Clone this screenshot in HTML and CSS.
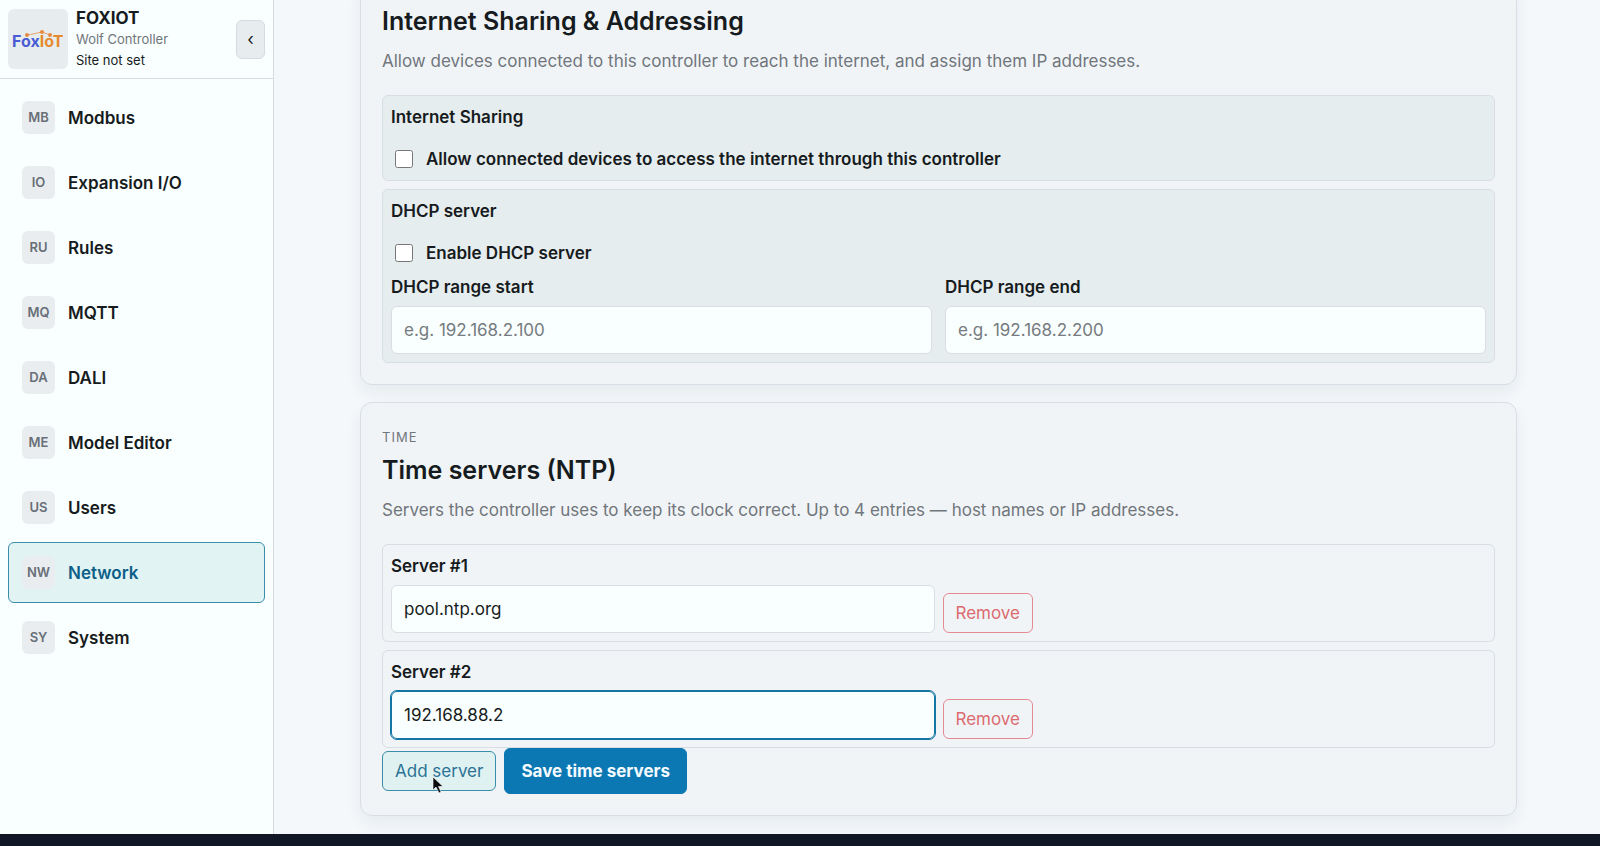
FILE: index.html
```html
<!DOCTYPE html>
<html lang="en">
<head>
    <meta charset="UTF-8">
    <meta name="viewport" content="width=device-width, initial-scale=1.0">
    <title>Network - FOXIOT</title>
    <link rel="stylesheet" href="styles.css">
</head>
<body>
<div class="app">
    <aside class="sidebar">
        <div class="brand">
            <div class="brand-logo">
                <svg viewBox="0 0 60 60" width="60" height="60" role="img" aria-label="FoxIoT">
                    <path d="M20 26 L34 23 L42 26" fill="none" stroke="#e9a468" stroke-width="1"/>
                    <circle cx="19" cy="26" r="2" fill="#e5893f"/>
                    <circle cx="34" cy="23" r="2" fill="#e5893f"/>
                    <circle cx="42" cy="26" r="2" fill="#e5893f"/>
                    <text x="4" y="38" class="logo-text"><tspan fill="#4a5bd4">Fox</tspan><tspan fill="#e58a2e">IoT</tspan></text>
                </svg>
            </div>
            <div class="brand-text">
                <strong class="brand-name">FOXIOT</strong>
                <span class="brand-model">Wolf Controller</span>
                <span class="brand-site">Site not set</span>
            </div>
            <button type="button" class="collapse-btn" aria-label="Collapse menu">‹</button>
        </div>
        <nav class="nav">
            <a class="nav-item" href="#modbus"><span class="nav-icon">MB</span>Modbus</a>
            <a class="nav-item" href="#expansion"><span class="nav-icon">IO</span>Expansion I/O</a>
            <a class="nav-item" href="#rules"><span class="nav-icon">RU</span>Rules</a>
            <a class="nav-item" href="#mqtt"><span class="nav-icon">MQ</span>MQTT</a>
            <a class="nav-item" href="#dali"><span class="nav-icon">DA</span>DALI</a>
            <a class="nav-item" href="#models"><span class="nav-icon">ME</span>Model Editor</a>
            <a class="nav-item" href="#users"><span class="nav-icon">US</span>Users</a>
            <a class="nav-item active" href="#network" aria-current="page"><span class="nav-icon">NW</span>Network</a>
            <a class="nav-item" href="#system"><span class="nav-icon">SY</span>System</a>
        </nav>
    </aside>

    <main class="content">
        <section class="card">
            <h2>Internet Sharing &amp; Addressing</h2>
            <p class="description">Allow devices connected to this controller to reach the internet, and assign them IP addresses.</p>

            <div class="panel filled">
                <h3>Internet Sharing</h3>
                <label class="check-row">
                    <input type="checkbox" id="nat_enabled">
                    Allow connected devices to access the internet through this controller
                </label>
            </div>

            <div class="panel filled">
                <h3>DHCP server</h3>
                <label class="check-row">
                    <input type="checkbox" id="dhcp_enabled">
                    Enable DHCP server
                </label>
                <div class="range-grid">
                    <div class="field">
                        <label for="dhcp_start">DHCP range start</label>
                        <input type="text" id="dhcp_start" placeholder="e.g. 192.168.2.100">
                    </div>
                    <div class="field">
                        <label for="dhcp_end">DHCP range end</label>
                        <input type="text" id="dhcp_end" placeholder="e.g. 192.168.2.200">
                    </div>
                </div>
            </div>
        </section>

        <section class="card">
            <div class="eyebrow">Time</div>
            <h2>Time servers (NTP)</h2>
            <p class="description">Servers the controller uses to keep its clock correct. Up to 4 entries — host names or IP addresses.</p>

            <div class="panel server">
                <div class="field">
                    <label for="server_1">Server #1</label>
                    <input type="text" id="server_1" value="pool.ntp.org">
                </div>
                <button type="button" class="btn danger">Remove</button>
            </div>

            <div class="panel server">
                <div class="field">
                    <label for="server_2">Server #2</label>
                    <input type="text" id="server_2" class="focused" value="192.168.88.2">
                </div>
                <button type="button" class="btn danger">Remove</button>
            </div>

            <div class="actions">
                <button type="button" class="btn secondary">Add server
                    <svg class="cursor" viewBox="0 0 12 18" width="12" height="18" aria-hidden="true">
                        <path d="M1 1 V14 L4 11 L7 17 L9 16 L6.500 10.500 H11 Z" fill="#0b0d10" stroke="#ffffff" stroke-width="0.600"/>
                    </svg>
                </button>
                <button type="submit" class="btn primary">Save time servers</button>
            </div>
        </section>
    </main>
</div>
</body>
</html>
```
FILE: styles.css
```css
* {
    box-sizing: border-box;
}

body {
    margin: 0;
    height: 100vh;
    padding-bottom: 12px;
    background: #101626;
    color: #161b20;
    font-family: Inter, "Liberation Sans", sans-serif;
    font-size: 17px;
    line-height: 26px;
}

h2, h3, p {
    margin: 0;
}

button, input {
    font: inherit;
    color: inherit;
}

.app {
    display: flex;
    height: 100%;
    background: #f4f8fb;
}

/* Sidebar */
.sidebar {
    flex: 0 0 274px;
    background: #f9fefe;
    border-right: 1px solid #d5dbe1;
}

.brand {
    display: flex;
    align-items: center;
    gap: 8px;
    height: 79px;
    padding: 0 8px;
    border-bottom: 1px solid #d5dbe1;
}

.brand-logo {
    width: 60px;
    height: 60px;
    border-radius: 6px;
    background: #e7edef;
}

.brand-logo svg {
    display: block;
}

.logo-text {
    font-size: 16px;
    font-weight: 700;
}

.brand-text {
    display: flex;
    flex: 1;
    flex-direction: column;
    font-size: 13px;
    line-height: 21px;
}

.brand-name {
    font-size: 17px;
    font-weight: 700;
}

.brand-model {
    color: #70767c;
}

.collapse-btn {
    width: 29px;
    height: 39px;
    padding: 0;
    border: 1px solid #d5dbe1;
    border-radius: 6px;
    background: #e7ecef;
}

.nav {
    display: flex;
    flex-direction: column;
    gap: 4px;
    padding: 8px;
}

.nav-item {
    display: flex;
    align-items: center;
    gap: 13px;
    height: 61px;
    padding: 0 13px;
    border: 1px solid transparent;
    border-radius: 6px;
    color: inherit;
    font-weight: 600;
    text-decoration: none;
}

.nav-icon {
    width: 33px;
    height: 33px;
    border-radius: 6px;
    background: #e9edf0;
    color: #686f77;
    font-size: 13px;
    line-height: 32px;
    text-align: center;
}

.nav-item.active {
    border-color: #3a8dab;
    background: #e1f3f3;
    color: #0c5f89;
}

.content {
    display: flex;
    flex: 1;
    flex-direction: column;
    justify-content: flex-end;
    gap: 17px;
    min-width: 0;
    overflow: hidden;
    padding: 0 83px 18px 86px;
}

.card {
    flex-shrink: 0;
    padding: 21px;
    border: 1px solid #d8dee3;
    border-radius: 12px;
    background: #f0f4f7;
    box-shadow: 0 8px 16px rgba(20, 30, 50, 0.06);
}

.eyebrow {
    color: #70767c;
    font-size: 13px;
    letter-spacing: 1px;
    text-transform: uppercase;
}

h2 {
    font-size: 25px;
    font-weight: 600;
    line-height: 40px;
}

.description {
    margin: 7px 0 21px;
    color: #70767c;
}

.panel {
    padding: 8px;
    border: 1px solid #d8dee3;
    border-radius: 6px;
}

.panel + .panel {
    margin-top: 8px;
}

.panel.filled {
    background: #e6edef;
}

h3 {
    margin-bottom: 16px;
    font-size: 17px;
    font-weight: 600;
}

.check-row {
    display: flex;
    align-items: center;
    gap: 13px;
    padding-left: 4px;
    font-weight: 600;
}

.check-row input {
    width: 18px;
    height: 18px;
    margin: 0;
}

.range-grid {
    display: grid;
    grid-template-columns: 1fr 1fr;
    gap: 13px;
    margin-top: 8px;
}

.field label {
    display: block;
    margin-bottom: 6px;
    font-weight: 600;
}

.field input {
    display: block;
    width: 100%;
    height: 48px;
    padding: 0 12px;
    border: 1px solid #d8dee3;
    border-radius: 6px;
    background: #f9fefe;
}

.field input::placeholder {
    color: #757b80;
}

.field input.focused {
    border-color: #1476a3;
    outline: 1px solid #1476a3;
}

.server {
    display: grid;
    grid-template-columns: 1fr 1fr;
    gap: 8px;
    align-items: end;
    justify-items: start;
}

.server .field {
    width: 100%;
}

.actions {
    display: flex;
    align-items: center;
    gap: 8px;
}

.btn {
    position: relative;
    height: 40px;
    padding: 0 12px;
    border: 1px solid;
    border-radius: 6px;
    background: none;
}

.btn.danger {
    border-color: #e58a92;
    color: #dc6b70;
}

.btn.secondary {
    border-color: #3a8dab;
    background: #e0f1f1;
    color: #2b7396;
}

.btn.primary {
    height: 46px;
    padding: 0 16px;
    border-color: #0b78b3;
    background: #0b78b3;
    color: #f4fbff;
    font-weight: 700;
}

.cursor {
    position: absolute;
    top: 24px;
    left: 49px;
}
```
